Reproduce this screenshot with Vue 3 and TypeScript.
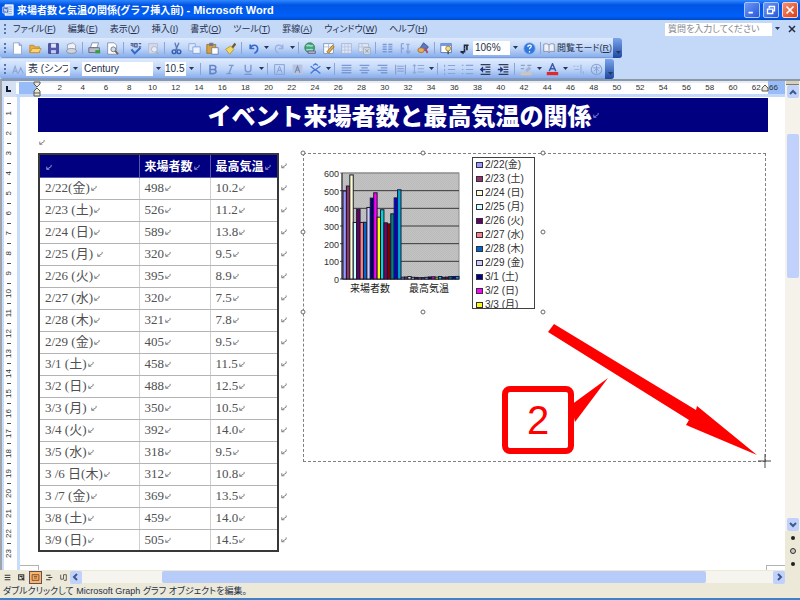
<script setup lang="ts">
interface Row { date: string; visitors: number; temp: string; legend: string; color: string }
interface Tool { icon?: string; label?: string; sep?: boolean; drop?: boolean }

const rows: Row[] = [
  { date: '2/22(金)', visitors: 498, temp: '10.2', legend: '2/22(金)', color: '#9999ff' },
  { date: '2/23 (土)', visitors: 526, temp: '11.2', legend: '2/23 (土)', color: '#993366' },
  { date: '2/24 (日)', visitors: 589, temp: '13.8', legend: '2/24 (日)', color: '#ffffcc' },
  { date: '2/25 (月) ', visitors: 320, temp: '9.5', legend: '2/25 (月)', color: '#ccffff' },
  { date: '2/26 (火)', visitors: 395, temp: '8.9', legend: '2/26 (火)', color: '#660066' },
  { date: '2/27 (水)', visitors: 320, temp: '7.5', legend: '2/27 (水)', color: '#ff8080' },
  { date: '2/28 (木)', visitors: 321, temp: '7.8', legend: '2/28 (木)', color: '#0066cc' },
  { date: '2/29 (金)', visitors: 405, temp: '9.5', legend: '2/29 (金)', color: '#ccccff' },
  { date: '3/1 (土)', visitors: 458, temp: '11.5', legend: '3/1 (土)', color: '#000080' },
  { date: '3/2 (日)', visitors: 488, temp: '12.5', legend: '3/2 (日)', color: '#ff00ff' },
  { date: '3/3 (月) ', visitors: 350, temp: '10.5', legend: '3/3 (月)', color: '#ffff00' },
  { date: '3/4 (火)', visitors: 392, temp: '14.0', legend: '3/4 (火)', color: '#00d8d8' },
  { date: '3/5 (水)', visitors: 318, temp: '9.5', legend: '', color: '#800060' },
  { date: '3 /6 日(木)', visitors: 312, temp: '10.8', legend: '', color: '#800000' },
  { date: '3 /7 (金)', visitors: 369, temp: '13.5', legend: '', color: '#008080' },
  { date: '3/8 (土)', visitors: 459, temp: '14.0', legend: '', color: '#0000e0' },
  { date: '3/9 (日)', visitors: 505, temp: '14.5', legend: '', color: '#00a8d8' },
]
const legendRows = rows.slice(0, 11)

const plot = { x: 38, y: 19, w: 117, h: 106, max: 600 }
const slot = 58 / 17
const barHeight = (v: number) => (v / plot.max) * plot.h
const axis = [600, 500, 400, 300, 200, 100, 0]
const axisY = (v: number) => plot.y + plot.h - barHeight(v)

const menus = [
  ['ファイル', 'F'], ['編集', 'E'], ['表示', 'V'], ['挿入', 'I'], ['書式', 'O'],
  ['ツール', 'T'], ['罫線', 'A'], ['ウィンドウ', 'W'], ['ヘルプ', 'H'],
]
const hTicks = Array.from({ length: 31 }, (_, i) => (i + 1) * 2)
const vTicks = Array.from({ length: 23 }, (_, i) => i + 1)

const standard: Tool[] = [
  { icon: 'page', label: '新規作成' }, { icon: 'open', label: '開く' }, { icon: 'save', label: '上書き保存' }, { icon: 'perm', label: 'アクセス許可' },
  { sep: true }, { icon: 'print', label: '印刷' }, { icon: 'preview', label: '印刷プレビュー' },
  { sep: true }, { icon: 'spell', label: 'スペルチェック' }, { icon: 'research', label: 'リサーチ' },
  { sep: true }, { icon: 'cut', label: '切り取り' }, { icon: 'copy', label: 'コピー' }, { icon: 'paste', label: '貼り付け' }, { icon: 'brush', label: '書式のコピー' },
  { sep: true }, { icon: 'undo', label: '元に戻す' }, { drop: true }, { icon: 'redo', label: 'やり直し' }, { drop: true },
  { sep: true }, { icon: 'globe', label: 'ハイパーリンク' }, { icon: 'pencil', label: '罫線' }, { icon: 'grid', label: '表の挿入' }, { icon: 'excel', label: 'ワークシートの挿入' },
  { sep: true }, { icon: 'columns', label: '段組み' }, { icon: 'direction', label: '文字の方向' }, { icon: 'draw', label: '図形描画' },
  { sep: true }, { icon: 'map', label: '見出しマップ' }, { icon: 'pilcrow', label: '編集記号' },
]
const formatting: Tool[] = [
  { sep: true }, { icon: 'bold', label: '太字' }, { icon: 'italic', label: '斜体' }, { icon: 'under', label: '下線' }, { drop: true },
  { sep: true }, { icon: 'boxA', label: '囲み線' }, { icon: 'shadeA', label: '網かけ' }, { icon: 'scaleA', label: '拡大/縮小' }, { drop: true },
  { sep: true }, { icon: 'justify', label: '両端揃え' }, { icon: 'center', label: '中央揃え' }, { icon: 'right', label: '右揃え' }, { icon: 'spread', label: '均等割り付け' }, { icon: 'spacing', label: '行間' }, { drop: true },
  { sep: true }, { icon: 'numbers', label: '段落番号' }, { icon: 'bullets', label: '箇条書き' }, { icon: 'outdent', label: 'インデント解除' }, { icon: 'indent', label: 'インデント' },
  { sep: true }, { icon: 'marker', label: '蛍光ペン' }, { drop: true }, { icon: 'colorA', label: 'フォントの色' }, { drop: true }, { icon: 'ruby', label: 'ルビ' }, { icon: 'circle', label: '囲い文字' },
]

const line = (d: string, c = '#5f83c8', w = 1.4) => `<path d="${d}" fill="none" stroke="${c}" stroke-width="${w}"/>`
const icons: Record<string, string> = {
  page: '<path d="M3 1h7l3 3v11H3z" fill="#fff" stroke="#8a9cc0"/><path d="M10 1v3h3" fill="#c8d4ec" stroke="#6a7ca8"/>',
  open: '<path d="M1 13V4h5l1 2h6v7z" fill="#e8b040" stroke="#b88828"/><path d="M1 13l3-5h11l-3 5z" fill="#ffd470" stroke="#c09030"/>',
  save: '<path d="M2 2h12v12H2z" fill="#5058b0" stroke="#30387c"/><path d="M5 2h6v5H5z" fill="#e0e4f8"/><path d="M5 10h6v4H5z" fill="#c8ccec"/>',
  perm: '<path d="M3 3l7-2 3 3v9H3z" fill="#f0f2f8" stroke="#8c98b0"/><ellipse cx="8" cy="11" rx="6" ry="3" fill="#d0d4dc" stroke="#808898"/>',
  print: '<path d="M5 1h8l-2 6H3z" fill="#fff" stroke="#7080a0"/><path d="M1 7h13v6H1z" fill="#b8bcc8" stroke="#586078"/><path d="M9 10h6v4H9z" fill="#30a048"/>',
  preview: '<path d="M2 1h8l3 3v11H2z" fill="#fff" stroke="#7888a8"/><circle cx="9" cy="9" r="3" fill="#d0dcf0" stroke="#606878"/><path d="M11 11l4 4" stroke="#806040" stroke-width="2"/>',
  spell: line('M2 2h3v4M2 4h3M7 2h3v4H7zM12 2h3M12 6h3', '#506090') + line('M3 9l4 5 7-7', '#3068c8', 2.4),
  research: '<path d="M2 2h11v12H2z" fill="#d4daea" stroke="#b0bad4"/><circle cx="9" cy="9" r="3.500" fill="#e8ecf6" stroke="#a4aec8"/><path d="M11 12l3 3" stroke="#a4aec8" stroke-width="2"/>',
  cut: line('M6 1l3 9M11 1l-4 9', '#5878b8', 1.6) + '<circle cx="5" cy="12" r="2.300" fill="none" stroke="#3860b0" stroke-width="1.800"/><circle cx="11" cy="12" r="2.300" fill="none" stroke="#3860b0" stroke-width="1.800"/>',
  copy: '<path d="M1 2h8v9H1z" fill="#dce8fc" stroke="#88a4d8"/><path d="M6 6h9v8H6z" fill="#eaf2ff" stroke="#7898d0"/>',
  paste: '<path d="M1 3h11v11H1z" fill="#d8a040" stroke="#987028"/><path d="M4 1h5v4H4z" fill="#707880"/><path d="M7 7h8v8H7z" fill="#fff" stroke="#6078a8"/>',
  brush: '<path d="M9 6l4-5 2 2-4 5z" fill="#705830"/><path d="M2 9l6-4 4 4-5 6z" fill="#f4d860" stroke="#b09030"/>',
  undo: line('M4 3v5h5', '#3468d0', 2) + line('M4 8c2-6 10-5 9 1 0 2-2 4-4 5', '#3468d0', 2),
  redo: line('M12 3v5H7', '#98b0dc', 1.6) + line('M12 8C10 2 2 3 3 9c0 2 2 4 4 5', '#98b0dc', 1.600),
  globe: '<circle cx="7" cy="7" r="6" fill="#48a868" stroke="#287848"/><path d="M3 5c4-3 5 2 8-1M3 9c3 2 5-1 8 1" stroke="#a0d8f8" stroke-width="2" fill="none"/><path d="M5 11h9v3H5z" fill="#b0b8c8" stroke="#586078"/>',
  pencil: '<path d="M2 2h12v12H2z" fill="#fff" stroke="#788cb8"/><path d="M2 6h12M8 2v12" stroke="#a8b8d8"/><path d="M6 12l7-8 2 2-7 8z" fill="#e8b048" stroke="#906820"/>',
  grid: '<path d="M2 2h12v12H2z" fill="#e0e8f8" stroke="#a0b0d0"/><path d="M2 6h12M2 10h12M6 2v12M10 2v12" stroke="#b4c2de"/>',
  excel: '<path d="M1 2h12v10H1z" fill="#e0e8f4" stroke="#a8b4cc"/><path d="M1 6h12M5 2v10" stroke="#b4c0d8"/><path d="M7 7h8v8H7z" fill="#dce4ec" stroke="#98a4b8"/><path d="M9 9l4 4M13 9l-4 4" stroke="#98a8b0" stroke-width="1.500"/>',
  columns: line('M2 3h5M2 6h5M2 9h5M2 12h5M9 3h5M9 6h5M9 9h5M9 12h5', '#7898d8', 1.8),
  direction: line('M3 2v12M3 2h3M6 8H3M11 2v11M9 11l2 3 3-3M9 3h4', '#88a4d8', 1.600),
  draw: '<path d="M8 1l6 5-4 5-6-4z" fill="#5878c8" stroke="#384c88"/><ellipse cx="5" cy="10" rx="4" ry="3" fill="#e8b058" stroke="#a06830"/><path d="M9 8l3 6 2-1-3-6z" fill="#b04870"/>',
  map: '<path d="M1 2h13v11H1z" fill="#fff" stroke="#4468b0"/><path d="M1 2h13v3H1z" fill="#7898e0"/><circle cx="10" cy="8" r="3" fill="#f4e080" stroke="#907828"/><path d="M10 11v4" stroke="#484030" stroke-width="1.500"/>',
  pilcrow: '<path d="M7 3h6v2h-1v5h-2V5H9v3H7z" fill="#202838"/><path d="M3 11h4V8h2v5H7v2l-4-2z" fill="#202838"/>',
  bold: line('M5 3v10M4 3h5c4 0 4 5 0 5H5M9 8c5 0 4 5 0 5H4', '#6684c4', 2),
  italic: line('M6 3h6M3 13h6M10 3L6 13', '#7c98d0', 1.600),
  under: line('M4 2v6c0 4 7 4 7 0V2M3 14h9', '#7894d0', 1.600),
  boxA: line('M2 2h12v12H2zM5 12l3-8 3 8M6 9h4', '#88a0d4', 1.200),
  shadeA: '<path d="M2 2h12v12H2z" fill="#b8c4dc"/>' + line('M5 12l3-8 3 8M6 9h4', '#7088b8', 1.300),
  scaleA: line('M2 4l5 4-5 5M14 4L8 8l6 5M5 3l3-2 3 2', '#4878d8', 1.600),
  justify: line('M2 3h12M2 6h12M2 9h12M2 12h12', '#7c98d4', 1.600),
  center: line('M2 3h12M4 6h8M2 9h12M4 12h8', '#7c98d4', 1.600),
  right: line('M2 3h12M6 6h8M2 9h12M6 12h8', '#7c98d4', 1.600),
  spread: line('M2 2v12M14 2v12M4 4h8M4 7h8M4 10h8', '#88a0d4', 1.500),
  spacing: line('M3 2v11M1 4l2-2 2 2M1 11l2 2 2-2M7 3h8M7 7h8M7 11h8', '#90a8d8', 1.300),
  numbers: line('M2 2v3M2 7v3M2 12v3M6 3h9M6 8h9M6 13h9', '#88a4d8', 1.300),
  bullets: line('M1 3h2M1 8h2M1 13h2M6 3h9M6 8h9M6 13h9', '#88a4d8', 1.400),
  outdent: line('M2 2h12M8 5h6M8 8h6M8 11h6M2 14h12', '#303c58', 1.500) + '<path d="M1 8l4-4v3h3v2H5v3z" fill="#203878"/>',
  indent: line('M2 2h12M8 5h6M8 8h6M8 11h6M2 14h12', '#303c58', 1.500) + '<path d="M8 8L4 4v3H1v2h3v3z" fill="#203878"/>',
  marker: line('M1 3h5M1 7h4M9 3h5', '#8ca0c8', 1.500) + '<path d="M6 9l5-5 3 3-5 4z" fill="#a8b4d0"/><path d="M1 12h13v3H1z" fill="#d8c4a8"/>',
  colorA: line('M4 10l4-9 4 9M5 7h6', '#3c58a8', 1.800) + '<path d="M1 11h14v4H1z" fill="#e02828"/>',
  ruby: line('M2 4h2M6 4h2M3 8h6M11 2v11M14 10v4', '#98b0dc', 1.500),
  circle: '<circle cx="8" cy="8" r="6.500" fill="none" stroke="#88a0d0" stroke-width="1.300"/>' + line('M4 6h8M8 3v10M5 10l3-3 3 3', '#88a0d0', 1.200),
  help: '<circle cx="8" cy="8" r="7" fill="#3078e0" stroke="#88b0f0"/><path d="M6 6c0-3 5-3 4 0-1 1-2 1-2 3M8 11v2" stroke="#fff" stroke-width="1.500" fill="none"/>',
  book: '<path d="M1 3c3-1 5-1 7 1 2-2 4-2 7-1v10c-3-1-5-1-7 1-2-2-4-2-7-1z" fill="#eef2fa" stroke="#707c98"/><path d="M8 4v10" stroke="#707c98"/>',
}
const views = [
  line('M3 4h10M3 8h10M3 12h10', '#383838', 2),
  line('M3 3h9v9H3zM5 6h5M8 8l5 5', '#383838', 2),
  line('M2 3h12v10H2zM5 6h6M5 9h6', '#6c3c30', 1.5),
  line('M2 4h8M6 8h7M2 12h8', '#383838', 1.8),
  line('M3 3v8h5V3h5v10h-4', '#484848', 1.5),
]
const handles = [[0, 0], [120, 0], [240, 0], [0, 79], [240, 79], [0, 159], [120, 159], [240, 159]]
</script>

<template>
  <div class="window">
    <svg class="defs" aria-hidden="true">
      <symbol id="mark" viewBox="0 0 8 8"><path d="M7 1v2L2 6M2 3v3h3" fill="none" stroke="currentColor" /></symbol>
      <symbol id="tri" viewBox="0 0 6 4"><path d="M1 0h5L3.500 3z" fill="#26365c" /></symbol>
    </svg>

    <header class="titlebar">
      <svg class="logo" viewBox="0 0 16 16"><path d="M4 1h11v14H4z" fill="#dce8ff" stroke="#fff" /><path d="M6 4h7M6 7h7M6 10h7M6 13h7" stroke="#7090d0" /><path d="M1 4h8v8H1z" fill="#3c68c8" stroke="#e8f0ff" /><path d="M3 6l1 4 1-3 1 3 1-4" fill="none" stroke="#fff" /></svg>
      <h1 class="caption">来場者数と気温の関係(グラフ挿入前) <span class="latin">- Microsoft Word</span></h1>
      <button class="win" aria-label="最小化"><svg viewBox="0 0 16 16"><path d="M4 10h5v2H4z" fill="#fff" /></svg></button>
      <button class="win" aria-label="元に戻す"><svg viewBox="0 0 16 16"><path d="M6 6V4h6v5h-2M4 7h6v5H4z" fill="none" stroke="#fff" stroke-width="1.500" /></svg></button>
      <button class="win close" aria-label="閉じる"><svg viewBox="0 0 16 16"><path d="M4 4l8 8M12 4l-8 8" stroke="#fff" stroke-width="2" /></svg></button>
    </header>

    <nav class="menubar">
      <span class="grip"></span>
      <button v-for="m in menus" :key="m[1]" class="menu">{{ m[0] }}(<u>{{ m[1] }}</u>)</button>
      <input class="ask" type="text" placeholder="質問を入力してください" aria-label="質問を入力してください">
      <svg class="drop"><use href="#tri" /></svg>
      <button class="shut" aria-label="文書を閉じる"><svg viewBox="0 0 8 8"><path d="M1 1l6 6M7 1L1 7" stroke="#222c44" stroke-width="1.500" /></svg></button>
    </nav>

    <div class="toolbar">
      <span class="grip"></span>
      <template v-for="(t, i) in standard" :key="i">
        <span v-if="t.sep" class="sep"></span>
        <svg v-else-if="t.drop" class="drop"><use href="#tri" /></svg>
        <button v-else class="tool" :aria-label="t.label"><svg viewBox="0 0 16 16" v-html="icons[t.icon!]"></svg></button>
      </template>
      <label class="combo zoom"><select aria-label="ズーム"><option>106%</option></select><svg class="drop"><use href="#tri" /></svg></label>
      <button class="tool" aria-label="ヘルプ"><svg viewBox="0 0 16 16" v-html="icons.help"></svg></button>
      <span class="sep"></span>
      <button class="reading"><svg viewBox="0 0 16 16" v-html="icons.book"></svg>閲覧モード(<u>R</u>)</button>
      <span class="cap"><svg class="drop"><use href="#tri" /></svg></span>
    </div>

    <div class="toolbar">
      <span class="grip"></span>
      <button class="tool" aria-label="スタイルと書式"><svg viewBox="0 0 16 16"><path d="M2 13L5 4l3 9M3 10h4M9 13l3-7 3 7" fill="none" stroke="#8ca4d4" stroke-width="1.300" /></svg></button>
      <label class="combo style"><select aria-label="スタイル"><option>表 (シンプル)</option></select><svg class="drop"><use href="#tri" /></svg></label>
      <label class="combo font"><select aria-label="フォント"><option>Century</option></select><svg class="drop"><use href="#tri" /></svg></label>
      <label class="combo size"><select aria-label="フォント サイズ"><option>10.5</option></select><svg class="drop"><use href="#tri" /></svg></label>
      <template v-for="(t, i) in formatting" :key="i">
        <span v-if="t.sep" class="sep"></span>
        <svg v-else-if="t.drop" class="drop"><use href="#tri" /></svg>
        <button v-else class="tool" :aria-label="t.label"><svg viewBox="0 0 16 16" v-html="icons[t.icon!]"></svg></button>
      </template>
      <span class="cap"><svg class="drop"><use href="#tri" /></svg></span>
    </div>

    <main class="work">
      <div class="sheet">
        <div class="hruler">
          <span class="corner"><svg viewBox="0 0 8 8"><path d="M2 1v5h4" fill="none" stroke="#101828" stroke-width="2" /></svg></span>
          <span class="hmargin"></span>
          <svg class="stops" viewBox="0 0 8 16"><path d="M1 1h6v2L4 6 1 3zM4 7l3 3v5H1v-5zM1 12h6" fill="#ece8d8" stroke="#585850" /></svg>
          <div class="hscale"><span v-for="n in hTicks" :key="n">{{ n }}</span></div>
          <div class="hend"><svg viewBox="0 0 8 8"><path d="M4 1l3 3v3H1V4z" fill="#ece8d8" stroke="#585850" /></svg>66</div>
        </div>

        <div class="body">
          <div class="vruler"><span v-for="n in vTicks" :key="n"><i>{{ n }}</i></span></div>
          <article class="page">
            <h2 class="banner">イベント来場者数と最高気温の関係<svg class="mark"><use href="#mark" /></svg></h2>
            <p class="blank"><svg class="mark"><use href="#mark" /></svg></p>
            <div class="content">
              <table class="data">
                <colgroup><col class="c1"><col class="c2"><col class="c3"></colgroup>
                <thead>
                  <tr>
                    <th><svg class="mark"><use href="#mark" /></svg></th>
                    <th>来場者数<svg class="mark"><use href="#mark" /></svg></th>
                    <th>最高気温<svg class="mark"><use href="#mark" /></svg></th>
                  </tr>
                </thead>
                <tbody>
                  <tr v-for="r in rows" :key="r.date">
                    <td>{{ r.date }}<svg class="mark"><use href="#mark" /></svg></td>
                    <td>{{ r.visitors }}<svg class="mark"><use href="#mark" /></svg></td>
                    <td>{{ r.temp }}<svg class="mark"><use href="#mark" /></svg></td>
                  </tr>
                </tbody>
              </table>
              <div class="rowmarks"><svg v-for="n in 18" :key="n" class="mark"><use href="#mark" /></svg></div>

              <section class="stage">
                <svg class="chart" viewBox="0 0 164 152" role="img" aria-label="来場者数と最高気温のグラフ">
                  <defs>
                    <pattern id="weave" width="2" height="2" patternUnits="userSpaceOnUse"><path d="M0 0h2v2H0z" fill="#c4c4c4" /><path d="M0 0h1v1H0zM1 1h1v1H1z" fill="#bababa" /></pattern>
                  </defs>
                  <rect :x="plot.x" :y="plot.y" :width="plot.w" :height="plot.h" fill="url(#weave)" stroke="#8c8c8c" />
                  <g v-for="v in axis" :key="v">
                    <path :d="`M${plot.x - 2} ${axisY(v)}h${plot.w + 2}`" :stroke="v === 600 ? '#8c8c8c' : '#383838'" />
                    <text class="tick" :x="plot.x - 3" :y="axisY(v) + 4" text-anchor="end">{{ v }}</text>
                  </g>
                  <g v-for="(r, i) in rows" :key="r.date" stroke="#181830" stroke-width="1">
                    <rect :x="plot.x + 1 + i * slot" :y="axisY(r.visitors)" :width="slot" :height="barHeight(r.visitors)" :fill="r.color" />
                    <rect :x="plot.x + 59 + i * slot" :y="axisY(+r.temp)" :width="slot" :height="barHeight(+r.temp)" :fill="r.color" />
                  </g>
                  <path :d="`M${plot.x} ${plot.y}v${plot.h}`" stroke="#202020" />
                  <text class="cat" x="66" y="138" text-anchor="middle">来場者数</text>
                  <text class="cat" x="125" y="138" text-anchor="middle">最高気温</text>
                </svg>
                <ul class="legend">
                  <li v-for="r in legendRows" :key="r.legend"><i :style="{ background: r.color }"></i>{{ r.legend }}</li>
                </ul>
                <svg class="overlay" viewBox="0 0 500 320" aria-label="手順2">
                  <g fill="#fff" stroke="#686868"><circle v-for="(h, i) in handles" :key="i" :cx="h[0] + 4" :cy="h[1] + 4" r="2" /></g>
                  <path d="M255 175l142 86 1-4 60 49-71-30 3-5-141-88z" fill="#f00" />
                  <path d="M272 256l37-27-33 44z" fill="#f00" />
                  <rect x="206" y="240" width="66" height="62" rx="5" fill="#fff" stroke="#f00" stroke-width="6" />
                  <text class="step" x="239" y="285" text-anchor="middle">2</text>
                  <path d="M459 312h13M466 305v14" stroke="#484848" stroke-width="1" />
                </svg>
              </section>
            </div>
            <div class="crop"><span></span><span></span></div>
          </article>
        </div>
      </div>

      <aside class="vscroll">
        <span class="split"></span>
        <button class="arrow" aria-label="上へ"><svg viewBox="0 0 8 8"><path d="M1 6l3-3 3 3" /></svg></button>
        <span class="above"></span>
        <span class="vthumb"></span>
        <span class="rest"></span>
        <button class="arrow" aria-label="下へ"><svg viewBox="0 0 8 8"><path d="M1 2l3 3 3-3" /></svg></button>
        <button class="jump" aria-label="前のページ"><svg viewBox="0 0 8 8"><circle cx="4" cy="4" r="2" fill="#202020" /></svg></button>
        <button class="jump" aria-label="オブジェクトの選択"><svg viewBox="0 0 8 8"><circle cx="4" cy="4" r="2.500" fill="#c8c8c0" stroke="#303030" /></svg></button>
        <button class="jump" aria-label="次のページ"><svg viewBox="0 0 8 8"><circle cx="4" cy="4" r="2" fill="#202020" /></svg></button>
      </aside>
    </main>

    <div class="bottom">
      <button v-for="(v, i) in views" :key="i" class="view" :class="{ on: i === 2 }" :aria-label="'表示 ' + (i + 1)"><svg viewBox="0 0 16 16" v-html="v"></svg></button>
      <button class="arrow" aria-label="左へ"><svg viewBox="0 0 8 8"><path d="M5 1L2 4l3 3" /></svg></button>
      <div class="htrack"><span class="gap1"></span><span class="hthumb"></span><span class="gap2"></span></div>
      <button class="arrow" aria-label="右へ"><svg viewBox="0 0 8 8"><path d="M3 1l3 3-3 3" /></svg></button>
      <span class="nook"></span>
    </div>
    <footer class="status">ダブルクリックして Microsoft Graph グラフ オブジェクトを編集。</footer>
  </div>
</template>

<style>
body { background: #c4d8f8; }
</style>

<style scoped>
* { box-sizing: border-box; }
button, input, select { font: inherit; color: inherit; border: 0; padding: 0; margin: 0; background: none; border-radius: 0; }
.window { min-height: 100vh; display: flex; flex-direction: column; background: #c4d8f8; font: 9px/12px "Liberation Sans", "Noto Sans CJK JP", sans-serif; font-feature-settings: "palt"; color: #26304a; border-bottom: 2px solid #4080c8; overflow: hidden; }
.defs { display: none; }
.grip { width: 2px; height: 10px; margin: 0 2px 0 4px; background: repeating-linear-gradient(#5874b0 0 2px, transparent 2px 4px); flex: none; }
.drop { width: 6px; height: 4px; flex: none; }

.titlebar { height: 20px; display: flex; align-items: center; gap: 3px; padding: 0 2px; background: linear-gradient(#3088ff, #0054e4 25%, #0060f8 80%, #0048c8); color: #fff; }
.logo { width: 12px; height: 12px; }
.caption { flex: 1; margin: 0; font-size: 10px; line-height: 14px; font-weight: 700; font-feature-settings: normal; }
.latin { font-size: 11px; }
.win { width: 16px; height: 16px; border: 1px solid #a8c4ff; border-radius: 2px; background: linear-gradient(135deg, #6c98f8, #2858d8); }
.win svg { display: block; width: 14px; height: 14px; }
.win.close { background: linear-gradient(135deg, #f09078, #d84018); border-color: #ffd0c0; }

.menubar { height: 18px; display: flex; align-items: center; padding-right: 4px; }
.menubar .grip { margin-right: 7px; }
.menu { margin-right: 12px; white-space: nowrap; }
.ask { width: 107px; height: 13px; margin-left: auto; padding: 0 3px; background: #fff; }
.ask::placeholder { color: #848890; opacity: 1; }
.menubar .drop { margin: 0 8px 0 2px; }
.shut { width: 8px; height: 8px; display: flex; }

.toolbar { height: 20px; align-self: flex-start; display: flex; align-items: center; background: linear-gradient(#deeafe, #c0d6f8 50%, #88aeec 95%, #6888c8); border-radius: 3px; }
.toolbar + .toolbar { margin-top: 1px; }
.tool { width: 18px; height: 18px; display: grid; place-items: center; flex: none; }
.tool svg { width: 13px; height: 13px; display: block; }
.sep { width: 1px; height: 12px; margin: 0 2px; background: #88a4d8; flex: none; }
.toolbar > .drop { margin: 0 1px; }
.combo { height: 14px; display: flex; align-items: center; flex: none; font-size: 10px; }
.combo select { flex: 1; min-width: 0; height: 14px; padding: 0 2px; background: #fff; appearance: none; overflow: hidden; }
.combo .drop { margin: 0 2px; }
.combo.zoom { width: 47px; }
.combo.style { width: 54px; margin-right: 2px; }
.combo.font { width: 81px; margin-right: 2px; }
.combo.size { width: 31px; margin-right: 2px; }
.combo.size select { padding: 0; }
.reading { display: flex; align-items: center; white-space: nowrap; margin: 0 1px 0 0; }
.reading svg { width: 12px; height: 12px; margin-right: 2px; }
.cap { width: 9px; align-self: stretch; display: flex; align-items: flex-end; justify-content: center; padding-bottom: 3px; background: linear-gradient(#7ca4ec, #1c48a0); border-radius: 0 3px 3px 0; }

.work { flex: 1; display: flex; border-top: 2px solid #8c98a8; border-left: 2px solid #a0a4a8; background: #fff; }
.sheet { flex: 1; min-width: 0; display: flex; flex-direction: column; }
.hruler { height: 16px; display: flex; align-items: stretch; background: linear-gradient(#e4ecf8 0 2px, #fff 2px 13px, #c4d8fc 13px); font-size: 8px; line-height: 14px; color: #303030; }
.corner { width: 14px; background: #d4e0f4; display: grid; place-items: center; }
.corner svg { width: 8px; height: 8px; }
.hmargin { width: 18px; margin: 1px 0 3px 3px; background: #98bcf8; }
.stops { width: 8px; height: 16px; margin-left: -4px; }
.hscale { flex: 1; display: flex; padding-left: 7px; }
.hscale span { flex: 1; text-align: center; }
.hend { width: 17px; margin-bottom: 3px; background: #98bcf8; display: flex; align-items: center; }
.hend svg { width: 8px; height: 8px; margin-left: -7px; }
.body { flex: 1; display: flex; }
.vruler { width: 18px; padding: 6px 5px 0 3px; border-right: 3px solid #c8dcfc; background: #fff; box-shadow: inset 2px 0 #c8dcfc; font-size: 8px; line-height: 8px; color: #303030; }
.vruler span { height: 20px; display: grid; place-items: center; background: linear-gradient(#505050, #505050) center top / 4px 1px no-repeat; }
.vruler i { font-style: normal; writing-mode: vertical-rl; transform: rotate(180deg); }

.page { flex: 1; min-width: 0; display: flex; flex-direction: column; padding: 0 17px 0 18px; }
.mark { width: 7px; height: 7px; color: #74787c; }
.banner { height: 34px; margin: 1px 0 0; display: flex; align-items: center; justify-content: center; background: #000080; color: #fff; font: 900 24px/30px "Noto Sans CJK JP", sans-serif; font-feature-settings: normal; white-space: nowrap; }
.banner .mark { color: #8c90d0; }
.blank { height: 21px; margin: 0; display: flex; align-items: center; }
.content { display: flex; align-items: flex-start; }
.data { width: 241px; flex: none; border-collapse: collapse; table-layout: fixed; border: 2px solid #383838; font: 13px/18px "Liberation Serif", "Noto Sans CJK JP", serif; color: #505050; }
.c1 { width: 100px; }
.c2 { width: 71px; }
.data th, .data td { height: 22px; padding: 0 0 0 5px; text-align: left; white-space: pre; border: 1px solid #b4b4b4; border-right-color: #d0d0d0; }
.data thead th { height: 23px; background: #000080; color: #fff; font: 700 12px/18px "Noto Sans CJK JP", sans-serif; border-color: #5858a8; }
.data thead .mark { color: #a8a8d0; }
.rowmarks { width: 24px; padding: 2px 0 0 1px; display: flex; flex-direction: column; flex: none; }
.rowmarks .mark { height: 22px; }

.stage { position: relative; flex: 1; min-width: 0; height: 309px; margin-right: 2px; display: flex; align-items: flex-start; border: 1px dashed #808080; }
.chart { width: 164px; height: 152px; flex: none; }
.tick { font-size: 9px; fill: #303030; }
.cat { font-size: 10px; fill: #202020; font-feature-settings: normal; }
.legend { width: 63px; height: 152px; margin: 3px 0 0 4px; padding: 0 0 0 3px; list-style: none; overflow: hidden; border: 1px solid #404040; font-size: 10px; line-height: 14px; color: #303030; }
.legend li { display: flex; align-items: center; height: 14px; gap: 2px; white-space: nowrap; }
.legend i { width: 7px; height: 6px; border: 1px solid #303040; flex: none; }
.overlay { position: absolute; left: -5px; top: -5px; width: 500px; height: 320px; }
.step { font-size: 40px; fill: #f00; }
.crop { flex: 1; display: flex; justify-content: space-between; align-items: flex-end; margin: 0 -17px 0 -18px; }
.crop span { width: 19px; height: 5px; border-top: 1px solid #b4b4b4; border-right: 1px solid #b4b4b4; }
.crop span + span { border-right: 0; border-left: 1px solid #b4b4b4; }

.vscroll { width: 15px; display: flex; flex-direction: column; align-items: center; background: #f4f2ea; padding: 0 1px; }
.split { width: 13px; height: 4px; background: #d8d0b8; border-bottom: 1px solid #807c68; }
.arrow { width: 12px; height: 13px; display: grid; place-items: center; background: #c0d2fc; border-radius: 2px; flex: none; }
.arrow svg { width: 8px; height: 8px; fill: none; stroke: #40588c; stroke-width: 2; }
.above { height: 36px; }
.vthumb { width: 12px; flex: 37; background: #c0d2fc; border-radius: 2px; }
.rest { flex: 62; }
.jump { width: 15px; height: 13px; display: grid; place-items: center; background: #ece9d8; }
.jump svg { width: 8px; height: 8px; }

.bottom { height: 14px; display: flex; align-items: center; background: #ece9d8; }
.view { width: 13px; height: 13px; display: grid; place-items: center; margin-left: 1px; flex: none; }
.view svg { width: 9px; height: 9px; }
.view.on { background: #f8b868; border: 1px solid #684c60; }
.htrack { flex: 1; height: 12px; display: flex; background: #f6f4ee; }
.gap1 { flex: 80; }
.hthumb { flex: 546; background: #b8ccfa; border-radius: 2px; }
.gap2 { flex: 67; }
.nook { width: 15px; }
.status { height: 14px; padding-left: 3px; background: #ece9d8; font-size: 9px; line-height: 14px; white-space: nowrap; }
</style>
